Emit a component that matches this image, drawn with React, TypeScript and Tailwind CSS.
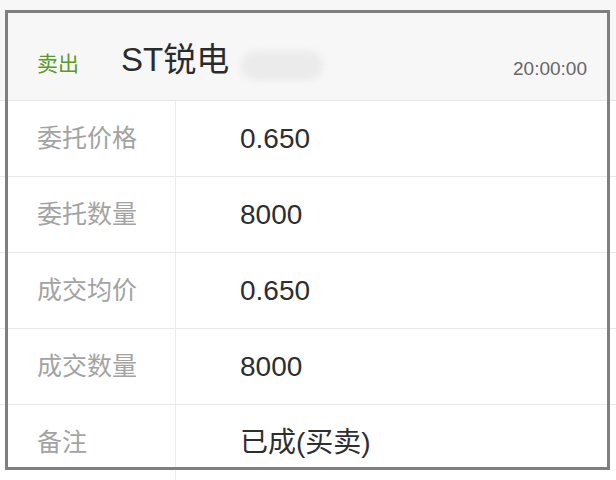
const rows = [
  { label: '委托价格', value: '0.650' },
  { label: '委托数量', value: '8000' },
  { label: '成交均价', value: '0.650' },
  { label: '成交数量', value: '8000' },
  { label: '备注', value: '已成(买卖)' },
];

export default function App() {
  return (
    <div className="relative w-[616px] h-[480px] overflow-hidden bg-white font-['Liberation_Sans','Noto_Sans_CJK_SC',sans-serif]">
      {/* Header */}
      <div className="h-[101px] bg-[#f7f7f7] border-b border-[#e6e6e6] flex items-start pl-[37px] pr-[29px]">
        <span className="mt-[53px] text-[21px] leading-none text-[#5b9a24]">卖出</span>
        <span className="ml-[42px] mt-[43px] text-[33px] leading-none text-[#2b2b2b]">ST锐电</span>
        <span className="ml-[12px] mt-[51px] w-[82px] h-[29px] rounded-full bg-[#ebebeb] blur-[3px]" />
        <span className="ml-auto mt-[59px] text-[19px] leading-none text-[#666666]">20:00:00</span>
      </div>

      {/* Rows */}
      {rows.map((r) => (
        <div key={r.label} className="flex h-[76px] border-b border-[#e8e8e8]">
          <div className="w-[176px] border-r border-[#ececec] flex items-center pl-[37px] text-[25px] text-[#a3a3a3]">
            {r.label}
          </div>
          <div className="flex-1 flex items-center pl-[64px] text-[28px] text-[#2e2e2e]">
            {r.value}
          </div>
        </div>
      ))}

      {/* Screenshot frame */}
      <div className="absolute left-[5px] top-[10px] w-[605px] h-[460px] border-[3px] border-[#7f7f7f] pointer-events-none" />
    </div>
  );
}
